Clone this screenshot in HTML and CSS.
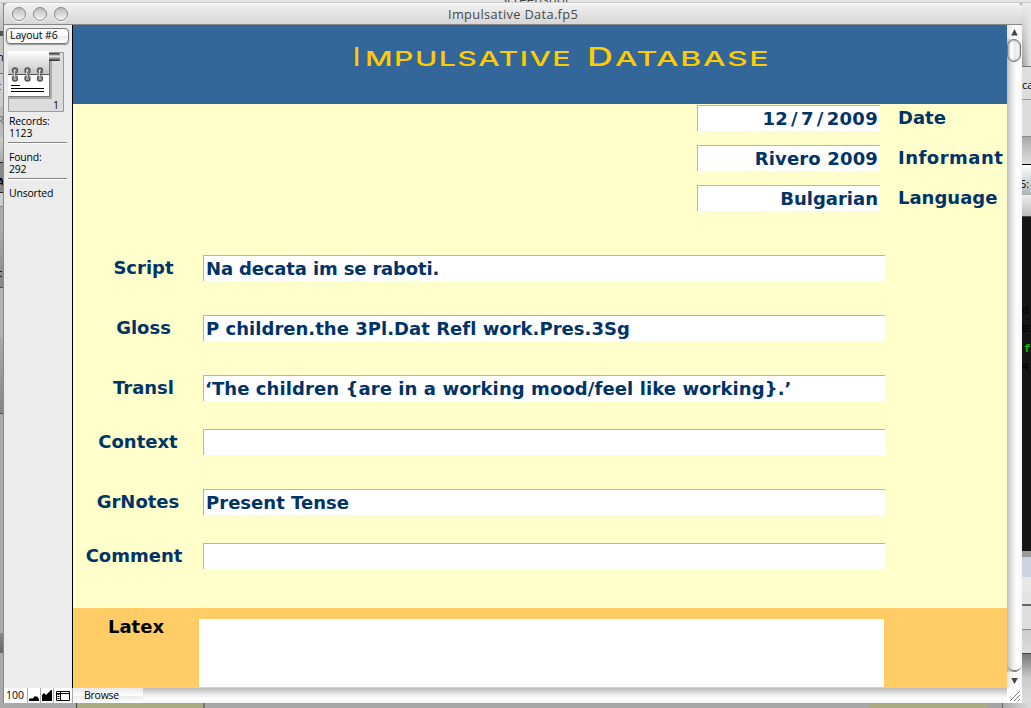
FILE: index.html
```html
<!DOCTYPE html>
<html lang="en">
<head>
<meta charset="utf-8">
<title>Impulsative Data.fp5</title>
<link rel="stylesheet" href="styles.css">
</head>
<body>
<div class="desktop">
  <div class="behind-top"><span>Screenshot</span></div>
  <div class="middle">
    <div class="behind-left">
      <i class="l1"></i><i class="l2">h</i><i class="l3">t</i><i class="l4">R</i><i class="l5"></i><i class="l6">A</i><i class="l7"></i><i class="l8"></i><i class="l9">c</i><i class="l10"></i><i class="l11"></i><i class="l12"></i><i class="l13"></i><i class="l14"></i>
    </div>
    <main class="window">
      <header class="titlebar">
        <div class="lights"><b></b><b></b><b></b></div>
        <span>Impulsative Data.fp5</span>
      </header>
      <div class="body">
        <aside class="sidebar">
          <button class="layout">Layout #6</button>
          <div class="book">
            <svg width="57" height="61" viewBox="0 0 57 61">
              <defs>
                <linearGradient id="page" x2="0" y2="1"><stop stop-color="#fff"/><stop offset="1" stop-color="#c5c5c5"/></linearGradient>
                <linearGradient id="tab" x2="0" y2="1"><stop stop-color="#222"/><stop offset=".4" stop-color="#eee"/><stop offset="1" stop-color="#222"/></linearGradient>
              </defs>
              <path d="M.5 1.500h55v59H.5z" fill="#dcdcdc" stroke="#999"/>
              <path d="M1 3h41.500v43.500H1z" fill="#777"/>
              <path d="M1 46.500h41.500V3h1.500v45H1z" fill="#aaa"/>
              <rect x="40" y="2" width="12" height="8" rx="1.500" fill="url(#tab)"/>
              <path d="M0 0h41v23H0z" fill="url(#page)"/>
              <path d="M0 23h41v22H0z" fill="#fff"/>
              <path d="M0 23.500h41" stroke="#555"/>
              <path d="M3 34.500h9M3 37.500h33M3 40.500h33" stroke="#000"/>
              <g fill="#aaa" stroke="#555" stroke-width="1.4">
                <circle cx="7" cy="19.500" r="2.500"/><circle cx="7" cy="27.500" r="2.500"/>
                <circle cx="19.500" cy="19.500" r="2.500"/><circle cx="19.500" cy="27.500" r="2.500"/>
                <circle cx="32" cy="19.500" r="2.500"/><circle cx="32" cy="27.500" r="2.500"/>
              </g>
              <path d="M9 19l-3 4 3 4M21.500 19l-3 4 3 4M34 19l-3 4 3 4" fill="none" stroke="#777" stroke-width="2"/>
              <path d="M7 19l-1 3 1 4M19.500 19l-1 3 1 4M32 19l-1 3 1 4" fill="none" stroke="#eee"/>
            </svg>
            <span>1</span>
          </div>
          <p class="records">Records:<br>1123</p>
          <p class="found">Found:<br>292</p>
          <p class="sort">Unsorted</p>
        </aside>
        <section class="content">
          <div class="banner">
            <svg width="934" height="79">
              <text class="cap" x="280" y="41">I</text>
              <text class="small" x="292" y="41" textLength="207" lengthAdjust="spacingAndGlyphs">MPULSATIVE</text>
              <text class="cap" x="514" y="41" textLength="26" lengthAdjust="spacingAndGlyphs">D</text>
              <text class="small" x="542" y="41" textLength="155" lengthAdjust="spacingAndGlyphs">ATABASE</text>
            </svg>
          </div>
          <div class="form">
            <div class="meta"><div class="field date">12<span>/</span>7<span>/</span>2009</div><label>Date</label></div>
            <div class="meta"><div class="field informant">Rivero 2009</div><label class="informant-label">Informant</label></div>
            <div class="meta"><div class="field">Bulgarian</div><label>Language</label></div>
            <div class="row script"><label>Script</label><div class="field">Na decata im se raboti.</div></div>
            <div class="row"><label>Gloss</label><div class="field">P children.the 3Pl.Dat Refl work.Pres.3Sg</div></div>
            <div class="row"><label>Transl</label><div class="field transl">‘The children {are in a working mood/feel like working}.’</div></div>
            <div class="row"><label class="b">Context</label><div class="field"></div></div>
            <div class="row"><label class="b">GrNotes</label><div class="field">Present Tense</div></div>
            <div class="row"><label class="c">Comment</label><div class="field"></div></div>
          </div>
          <div class="latex"><label>Latex</label><div class="box"></div></div>
        </section>
        <div class="scroll">
          <div class="arrow"><svg width="15" height="14"><path d="M7.500 4l3.300 6.500H4.200z" fill="#444"/></svg></div>
          <div class="thumb"></div>
          <div class="track"></div>
          <div class="arrow down"><svg width="15" height="16"><path d="M4.200 6h6.600l-3.300 6z" fill="#444"/></svg></div>
        </div>
      </div>
      <footer class="status">
        <span class="zoom">100</span>
        <span class="cell"><svg width="12" height="14"><path d="M1 13v-2l2-1 1 1 3-3 1 1 1-1 1 2 1 1v2z"/></svg></span>
        <span class="cell"><svg width="12" height="14"><path d="M1 13V7l2-2 2 2 5-5h1v11z"/></svg></span>
        <span class="cell last"><svg width="17" height="14"><path d="M2.500 3.500h13v9h-13z" fill="#fff" stroke="#000"/><path d="M2 5.500h14M6.500 3v10" stroke="#000"/><path d="M4.500 6v7" stroke="#000" stroke-width="2" stroke-dasharray="1 1"/></svg></span>
        <span class="mode">Browse</span>
        <span class="hscroll"></span>
        <span class="grip"><svg width="15" height="15"><path d="M3 13L13 3M7 13l6-6M11 13l2-2" stroke="#777"/></svg></span>
      </footer>
    </main>
    <div class="behind-right">
      <i class="r1"></i><i class="r2">ca</i><i class="r3"></i><i class="r4"></i><i class="r5">5:</i><i class="r6"></i><i class="r7"><em>d</em><em>01</em><em class="green">f</em><em>4</em></i><i class="r8"></i><i class="r9"></i><i class="r10"></i><i class="r11"></i><i class="r12"></i><i class="r13"></i>
    </div>
  </div>
  <div class="behind-bottom"><i class="g1"></i><i class="o1"></i><i class="g2"></i><i class="o2"></i><i class="g3"></i><i class="g4"></i></div>
</div>
</body>
</html>
```

FILE: styles.css
```css
* { box-sizing: border-box; }
body { margin: 0; overflow: hidden; font-family: "Open Sans", "Noto Sans", sans-serif; }
i, em { font-style: normal; display: block; }
svg { display: block; }
p { margin: 0; }

.desktop { width: 1031px; height: 708px; background: #aaa; overflow: hidden; }
.behind-top { height: 3px; background: #e6e6e6; border-bottom: 1px solid #ccc; overflow: hidden; }
.behind-top span { display: block; margin: -8px 0 0 500px; font: 13px/15px "Open Sans", sans-serif; letter-spacing: .2px; color: #444; }
.middle { display: flex; height: 700px; }

.behind-left { width: 4px; overflow: hidden; border-right: 1px solid #888; font: 11px/14px "Open Sans", sans-serif; color: #000; background: #aaa; }
.behind-left i { overflow: hidden; text-indent: -3px; }
.l1 { height: 28px; background: linear-gradient(#ddd, #bbb); }
.l2 { height: 42px; padding-top: 14px; background: #c4c4c4; border-top: 5px solid #555; }
.l3 { height: 34px; padding-top: 5px; background: #ccc; border-top: 1px solid #777; }
.l4 { height: 30px; padding-top: 6px; background: #bbb; color: #777; }
.l5 { height: 26px; background: linear-gradient(#ccc, #aaa); border-bottom: 1px solid #222; }
.l6 { height: 30px; padding-top: 12px; background: #888; border-bottom: 1px solid #222; font-weight: 700; }
.l7 { height: 14px; background: #ccc; border-bottom: 1px solid #888; }
.l8 { height: 23px; background: #aaa; }
.l9 { height: 58px; padding-top: 36px; background: linear-gradient(#aaa, #888); border-bottom: 1px solid #555; }
.l10 { height: 50px; background: #b4b4b4; }
.l11 { height: 76px; background: linear-gradient(#aaa, #858585); border-bottom: 1px solid #555; }
.l12 { height: 219px; background: #aaa; }
.l13 { height: 20px; background: linear-gradient(#888, #666); }
.l14 { height: 50px; background: #aaa; }

.window { width: 1018px; height: 700px; border-radius: 5px 5px 0 0; overflow: hidden; background: #ececec; }
.titlebar { height: 22px; display: flex; background: linear-gradient(#f1f1f1, #d6d6d6); border-top: 1px solid #fafafa; border-bottom: 1px solid #888; color: #484848; }
.titlebar > span { padding-left: 380px; font-size: 12.800px; letter-spacing: .35px; line-height: 20px; }
.lights { display: flex; gap: 7px; padding: 3px 0 0 8px; width: 64px; }
.lights b { width: 14px; height: 14px; border: 1px solid #868686; border-radius: 50%; background: linear-gradient(#bbb, #d8d8d8 50%, #f3f3f3); box-shadow: 0 1px 0 #fff; }
.body { display: flex; height: 663px; }
.sidebar { width: 69px; border-right: 1px solid #000; background: #ececec; color: #000; font-size: 10.500px; line-height: 12px; letter-spacing: -.2px; }
.layout { display: block; width: 63px; height: 16px; margin: 3px 0 0 2px; padding: 0 0 1px 3px; text-align: left; border: 1px solid #777; border-radius: 4px; background: linear-gradient(#fff, #fff 45%, #ececec 50%, #fff); font: 10.500px/11px "Open Sans", sans-serif; letter-spacing: -.1px; color: #000; box-shadow: 0 1px 1px #999; }
.book { position: relative; margin: 7px 0 0 4px; height: 61px; }
.book span { position: absolute; left: 45px; top: 48px; }
.records, .found { margin: 3px 5px 0 4px; padding-left: 1px; height: 28px; border-bottom: 1px solid #858585; box-shadow: 0 1px #fff; }
.found { margin-top: 8px; }
.sort { margin: 8px 0 0 5px; }

.content { width: 934px; background: #ffc; color: #036; font: bold 18px/24px "DejaVu Sans", sans-serif; }
.banner { height: 79px; background: #369; }
.banner text { fill: #fc0; font-family: Inter, sans-serif; font-weight: 500; }
.banner .cap { font-size: 26px; }
.banner .small { font-size: 20.500px; letter-spacing: 1px; }
.form { height: 504px; padding-top: 1px; }
.field { height: 26px; background: #fff; border: solid #b4b4ac; border-width: 1px 0 0 1px; padding-left: 2px; white-space: nowrap; line-height: 25px; letter-spacing: .03px; }
.meta { display: flex; height: 26px; margin: 0 0 14px 624px; }
.meta .field { width: 183px; text-align: right; padding-right: 2px; letter-spacing: 0; }
.meta .date { letter-spacing: .3px; }
.meta .date span { padding: 0 3px; }
.meta .informant { letter-spacing: .15px; }
.meta label { padding-left: 18px; line-height: 25px; }
.meta .informant-label { letter-spacing: .5px; }
.row { display: flex; height: 26px; margin-bottom: 34px; }
.row.script { margin-top: 44px; }
.row.script .field { letter-spacing: -.15px; }
.row .transl { letter-spacing: .09px; padding-left: 1px; }
.row:nth-child(6), .row:nth-child(8) { margin-bottom: 28px; }
.row label { width: 130px; padding-left: 11px; text-align: center; line-height: 25px; }
.row label.b { padding: 0; }
.row label.c { padding: 0 8px 0 0; }
.row .field { width: 682px; }
.latex { height: 80px; background: #fc6; color: #000; display: flex; padding-top: 11px; }
.latex label { width: 126px; text-align: center; line-height: 16px; }
.latex .box { width: 685px; height: 68px; background: #fff; }

.scroll { width: 15px; background: linear-gradient(90deg, #bdbdbd, #e2e2e2 30%, #fff 65%, #f6f6f6); }
.arrow { height: 14px; background: linear-gradient(90deg, #e4e4e4, #fff 50%, #f4f4f4); }
.thumb { height: 23px; margin-right: 1px; border: 1px solid #777; border-radius: 7px; background: linear-gradient(90deg, #ccc, #fff 30%, #e7e7e7 60%, #fff); box-shadow: inset 0 0 2px #666; }
.track { height: 610px; border-bottom: 2px solid #888; border-radius: 0 0 8px 8px; }
.arrow.down { height: 16px; }

.status { display: flex; height: 16px; border-bottom: 1px solid #888; background: #fff; font-size: 10.500px; line-height: 14px; color: #000; }
.status .zoom { width: 24px; padding-left: 2px; border-right: 1px solid #aaa; }
.cell { width: 13px; border-right: 1px solid #aaa; }
.cell.last { width: 19px; }
.mode { width: 70px; padding-left: 11px; letter-spacing: -.25px; background: linear-gradient(#e9e9e9, #fff 50%, #ececec 55%, #fff); }
.hscroll { width: 864px; background: linear-gradient(#bbb, #e2e2e2 35%, #fff 70%, #f4f4f4); }
.grip { width: 15px; background: #fff; }

.behind-right { width: 9px; overflow: hidden; background: #ccc; color: #000; font: 11px/14px "Open Sans", sans-serif; }
.behind-right i { overflow: hidden; }
.r1 { height: 64px; background: linear-gradient(90deg, transparent, #e8e8e8), linear-gradient(#eee, #999); border-bottom: 1px solid #777; }
.r2 { height: 33px; padding-top: 11px; background: #ddd; border-bottom: 1px solid #999; }
.r3 { height: 37px; background: #dcdcdc; border-bottom: 1px solid #888; }
.r4 { height: 28px; background: linear-gradient(#aaa, #ddd); border-bottom: 1px solid #000; }
.r5 { height: 30px; padding-top: 12px; background: linear-gradient(#fff, #aab5b3); text-indent: -2px; }
.r6 { height: 22px; background: linear-gradient(#eee, #bbb); border-bottom: 1px solid #444; }
.r7 { height: 334px; padding-top: 85px; background: #151515; font: 11px/18px "Liberation Mono", monospace; color: #000; }
.r7 .green { color: #0c0; height: 20px; line-height: 23px; text-indent: 2px; font-weight: 700; }
.r8 { height: 6px; background: #999; }
.r9 { height: 20px; background: #ccd2e0; }
.r10 { height: 29px; background: #e4e4e4; border-top: 14px solid #e8e8e8; border-bottom: 2px solid #666; }
.r11 { height: 24px; background: #ddd; border-bottom: 1px solid #888; }
.r12 { height: 24px; background: linear-gradient(#ccc, #ddd); border-bottom: 1px solid #444; }
.r13 { height: 49px; background: linear-gradient(#777, #ccc 50%, #ddd); }

.behind-bottom { display: flex; height: 5px; }
.g1 { width: 77px; background: #aaa; border-right: 1px solid #444; }
.o1 { width: 128px; background: #aaab83; border-right: 2px solid #777; }
.g2 { width: 664px; background: #a8a8a8; }
.o2 { width: 118px; background: #aaab83; }
.g3 { width: 16px; background: #a4a4a4; border-right: 1px solid #666; }
.g4 { width: 28px; background: linear-gradient(90deg, #aaa, #ddd); }
```
